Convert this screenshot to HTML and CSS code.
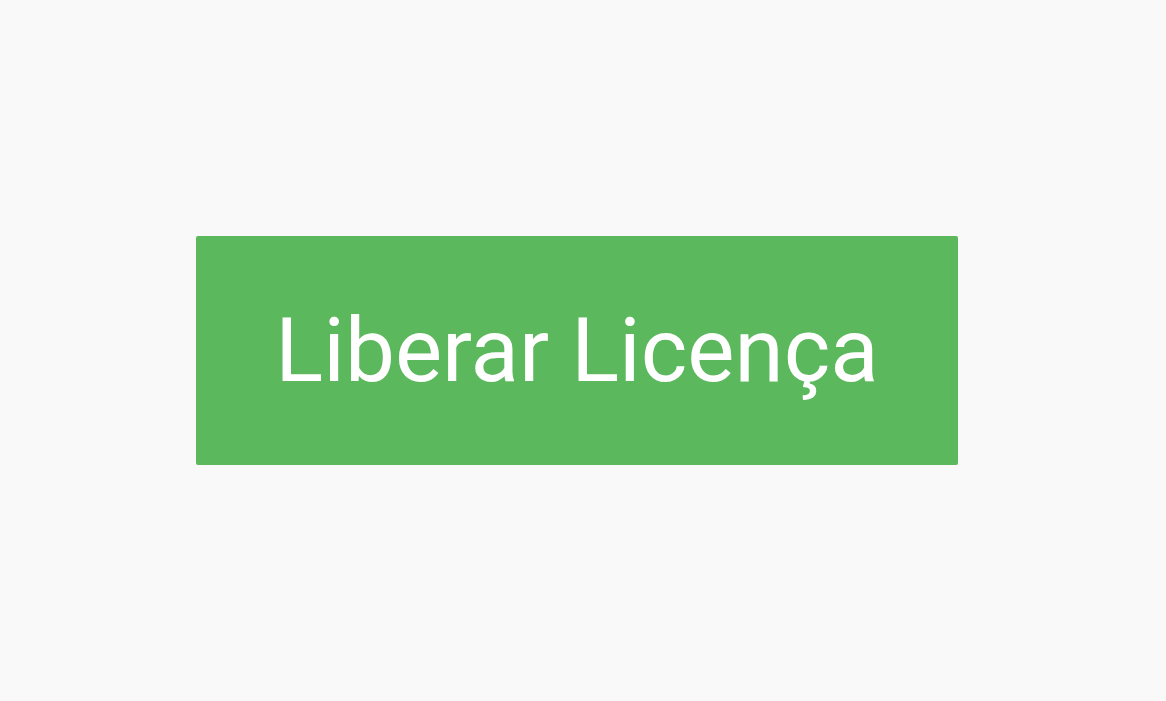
FILE: index.html
```html
<!DOCTYPE html>
<html lang="pt">
<head>
<meta charset="utf-8">
<link rel="stylesheet" href="styles.css">
</head>
<body>
<main class="stage">
  <button class="btn-success">Liberar Licença</button>
</main>
</body>
</html>
```
FILE: styles.css
```css
html, body {
  margin: 0;
  padding: 0;
  background: #f9f9f9;
  height: 100%;
}
.stage {
  height: 701px;
  display: flex;
  align-items: center;
  justify-content: center;
  padding-right: 12px;
  padding-bottom: 1px;
  box-sizing: border-box;
}
.btn-success {
  width: 762px;
  height: 229px;
  background: #5cb85c;
  color: #ffffff;
  border: none;
  border-radius: 2px;
  font-family: Roboto, "Liberation Sans", sans-serif;
  font-size: 89px;
  font-weight: 400;
  padding: 0;
  margin: 0;
}
```
